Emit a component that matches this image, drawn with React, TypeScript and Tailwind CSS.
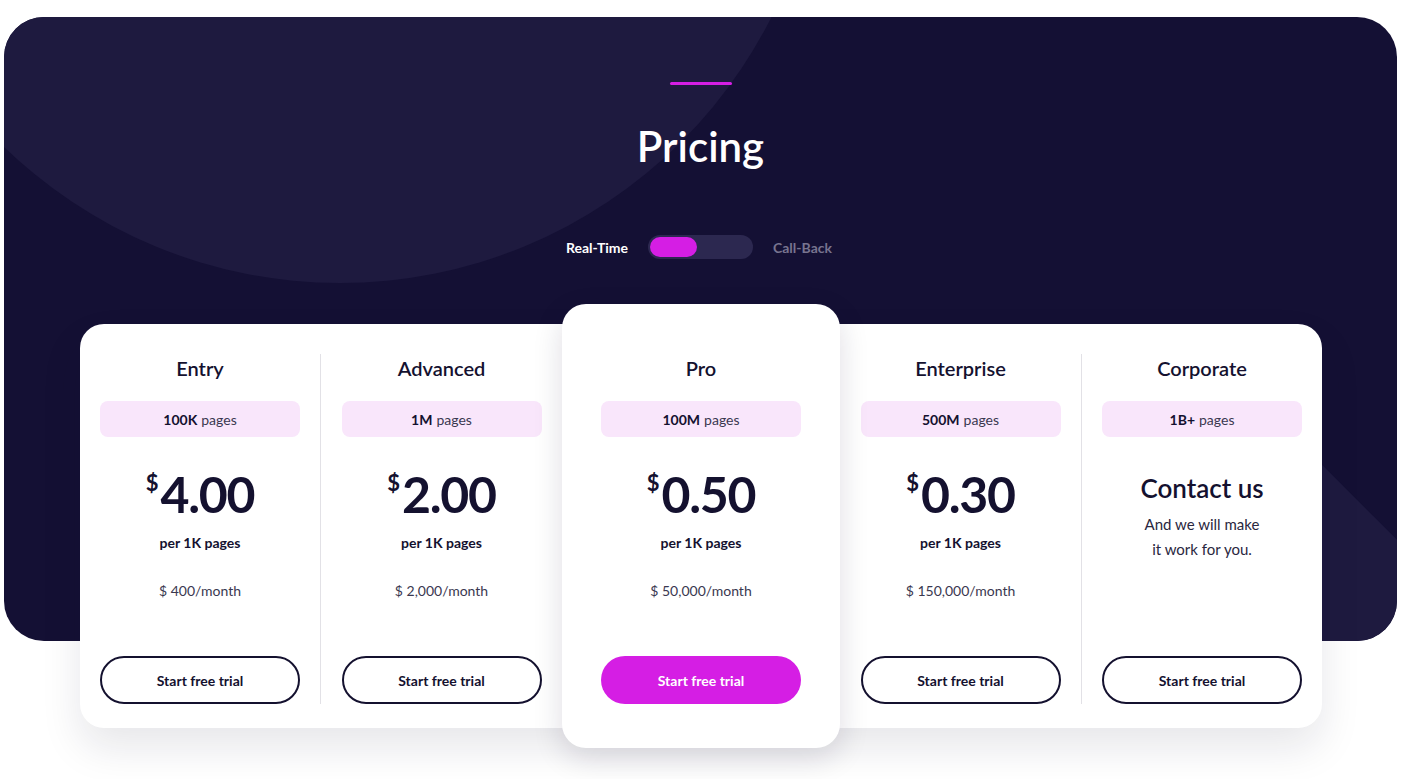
import React from 'react';

const plans = [
  { name: 'Entry', pages: '100K', price: '4.00', month: '$ 400/month' },
  { name: 'Advanced', pages: '1M', price: '2.00', month: '$ 2,000/month' },
  { name: 'Pro', pages: '100M', price: '0.50', month: '$ 50,000/month', featured: true },
  { name: 'Enterprise', pages: '500M', price: '0.30', month: '$ 150,000/month' },
  { name: 'Corporate', pages: '1B+', contact: true },
];

type Plan = (typeof plans)[number] & { featured?: boolean; contact?: boolean; price?: string; month?: string };

const PlanBody = ({ plan }: { plan: Plan }) => (
  <div className="flex flex-col items-center h-full">
    <h3 className="text-[20px] leading-[28px] font-semibold text-[#14112f]">{plan.name}</h3>
    <div className="mt-[19px] w-[200px] h-9 rounded-lg bg-[#f9e6fb] flex items-center justify-center text-[14px] text-[#14112f]">
      <span className="font-bold">{plan.pages}</span>
      <span className="ml-1 font-normal text-[#3a3850]">pages</span>
    </div>
    {plan.contact ? (
      <>
        <div className="mt-[33px] text-[26px] leading-[36px] font-semibold text-[#14112f]">Contact us</div>
        <p className="mt-[6px] text-[15px] leading-[25px] font-normal text-[#2a2740] text-center">
          And we will make
          <br />
          it work for you.
        </p>
      </>
    ) : (
      <>
        <div className="mt-[33px] flex items-start text-[#14112f] h-12">
          <span className="text-[22px] leading-none font-bold mt-[2px] mr-[2px]">$</span>
          <span className="text-[50px] leading-[48px] font-bold tracking-tight">{plan.price}</span>
        </div>
        <div className="mt-[15px] text-[14px] leading-5 font-bold text-[#14112f]">per 1K pages</div>
        <div className="mt-[28px] text-[14px] leading-5 font-normal text-[#3a3850]">{plan.month}</div>
      </>
    )}
    <button
      className={
        plan.featured
          ? 'mt-auto w-[200px] h-12 rounded-full bg-[#d51ee4] text-white text-[14px] font-bold'
          : 'mt-auto w-[200px] h-12 rounded-full border-2 border-[#14112f] text-[#14112f] text-[14px] font-bold'
      }
    >
      Start free trial
    </button>
  </div>
);

export default function App() {
  return (
    <div className="min-h-screen bg-white pt-[17px] px-[4px] pb-8" style={{ fontFamily: 'Lato, "Noto Sans", sans-serif' }}>
      {/* dark header panel */}
      <div className="relative h-[624px] w-[1393px] rounded-[40px] bg-[#141034] overflow-hidden">
        <div className="absolute left-[-147px] top-[-700px] w-[966px] h-[966px] rounded-full bg-[#1e1a3f]" />
        <div className="absolute left-[1096px] top-[438px] w-[300px] h-[300px] rotate-45 bg-[#1e1a3f]" />
        <div className="relative flex flex-col items-center pt-[65px]">
          <div className="w-[62px] h-[3px] rounded-full bg-[#d51ee4]" />
          <h1 className="mt-[33px] text-[42px] leading-[56px] font-semibold text-white">Pricing</h1>
          <div className="mt-[61px] flex items-center">
            <span className="text-[14px] font-bold text-white w-[68px] text-right">Real-Time</span>
            <div className="ml-5 w-[105px] h-6 rounded-full bg-[#2c2850] p-[2px]">
              <div className="w-[47px] h-5 rounded-full bg-[#d51ee4]" />
            </div>
            <span className="ml-5 text-[14px] font-bold text-[#78748f] w-[68px]">Call-Back</span>
          </div>
        </div>
      </div>

      {/* pricing cards */}
      <div className="relative -mt-[317px] ml-[76px] w-[1242px] h-[404px] flex rounded-3xl bg-white shadow-[0_20px_40px_rgba(20,17,47,0.10)]">
        {plans.map((p, i) => {
          const plan = p as Plan;
          if (plan.featured) {
            return (
              <div
                key={plan.name}
                className="relative -my-5 w-[278px] shrink-0 rounded-3xl bg-white pt-[50px] pb-[44px] shadow-[0_10px_30px_rgba(20,17,47,0.14)]"
              >
                <PlanBody plan={plan} />
              </div>
            );
          }
          const divider = i === 1 || i === 4;
          const w = i === 0 ? 'w-[240px]' : i === 1 ? 'w-[242px]' : 'w-[241px]';
          return (
            <div key={plan.name} className={`${w} shrink-0 pt-[30px] pb-[24px]`}>
              <div className={divider ? 'h-full border-l border-[#e2e1e6]' : 'h-full'}>
                <PlanBody plan={plan} />
              </div>
            </div>
          );
        })}
      </div>
    </div>
  );
}
